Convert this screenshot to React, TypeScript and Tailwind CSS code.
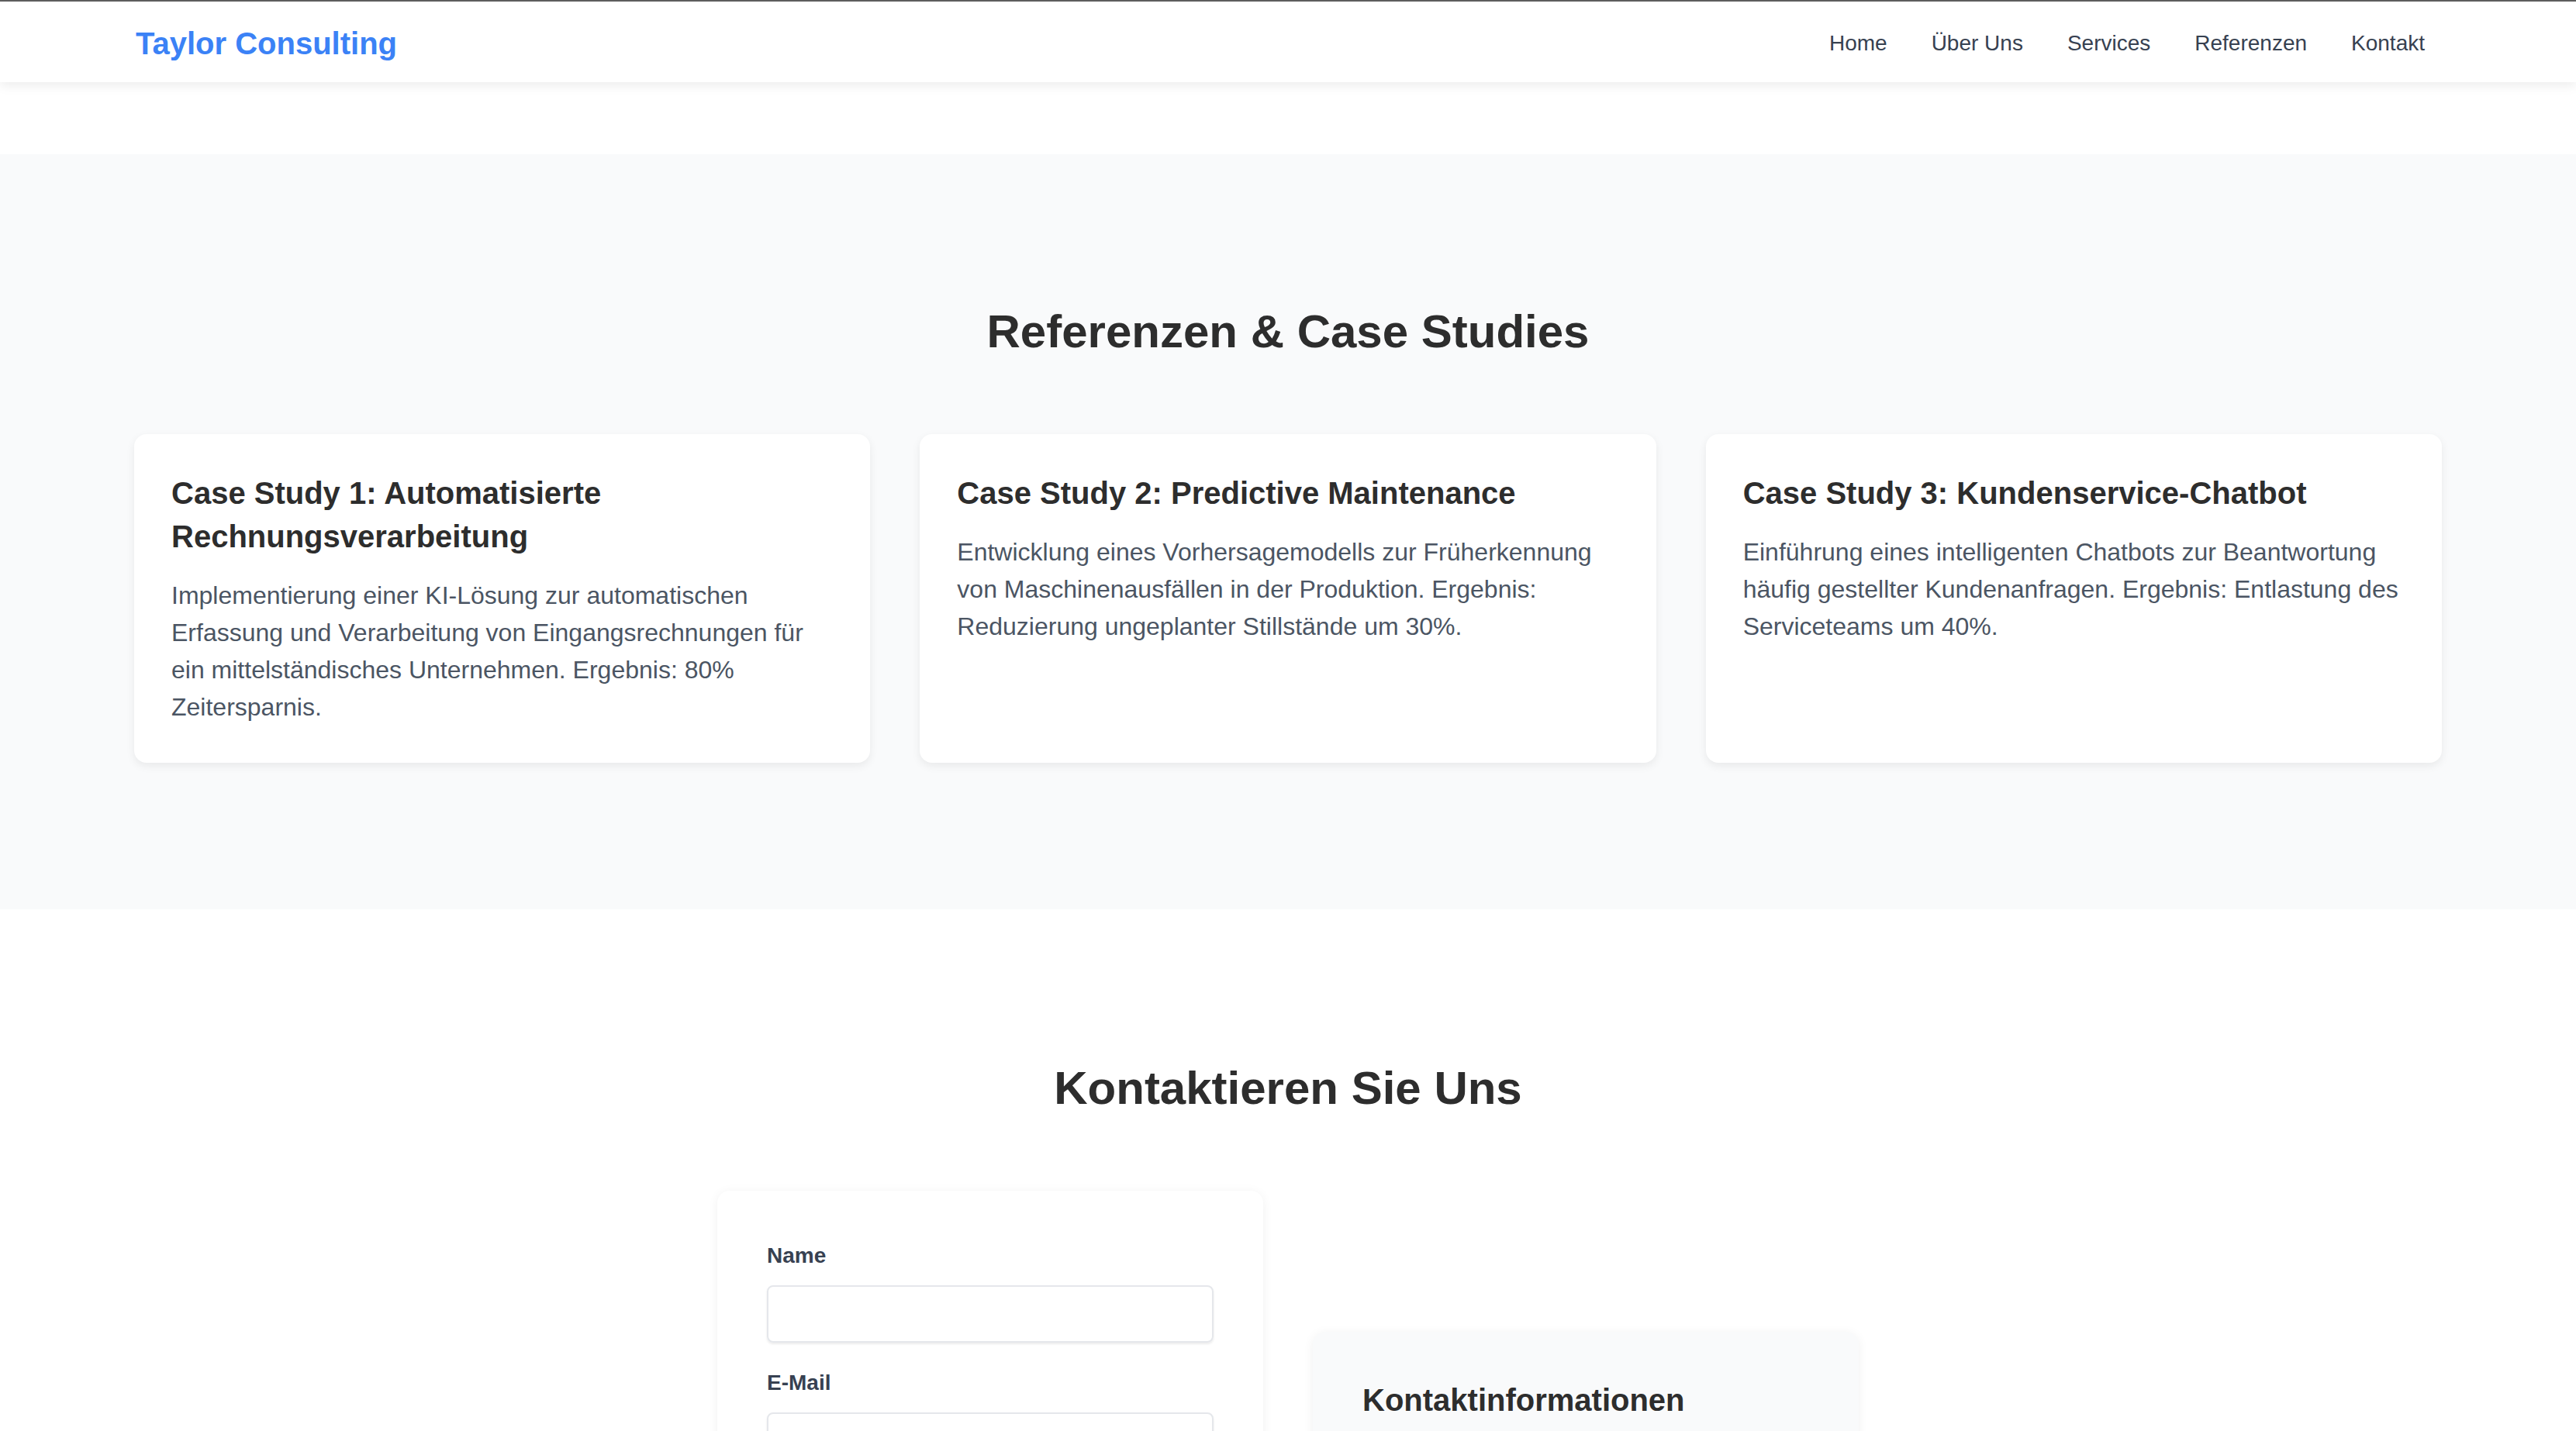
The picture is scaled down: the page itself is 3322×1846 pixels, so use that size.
import React from 'react'

const cases = [
  {
    title: 'Case Study 1: Automatisierte Rechnungsverarbeitung',
    text: 'Implementierung einer KI-Lösung zur automatischen Erfassung und Verarbeitung von Eingangsrechnungen für ein mittelständisches Unternehmen. Ergebnis: 80% Zeitersparnis.',
  },
  {
    title: 'Case Study 2: Predictive Maintenance',
    text: 'Entwicklung eines Vorhersagemodells zur Früherkennung von Maschinenausfällen in der Produktion. Ergebnis: Reduzierung ungeplanter Stillstände um 30%.',
  },
  {
    title: 'Case Study 3: Kundenservice-Chatbot',
    text: 'Einführung eines intelligenten Chatbots zur Beantwortung häufig gestellter Kundenanfragen. Ergebnis: Entlastung des Serviceteams um 40%.',
  },
]

const navItems = ['Home', 'Über Uns', 'Services', 'Referenzen', 'Kontakt']

export default function App() {
  return (
    <div className="min-h-screen bg-white font-['Liberation_Sans','Helvetica',sans-serif] border-t-2 border-[#5f5f5f]">
      {/* header */}
      <header className="relative z-10 h-[104px] bg-white shadow-[0_4px_14px_rgba(0,0,0,0.08)]">
        <div className="mx-auto flex h-full w-[2976px] items-center justify-between pt-[3px] pl-[2px]">
          <span className="text-[40px] font-bold text-[#3b82f6]">Taylor Consulting</span>
          <nav className="flex items-center gap-[57px] pr-[22px]">
            {navItems.map((item) => (
              <a key={item} className="text-[28px] text-[#374151]">
                {item}
              </a>
            ))}
          </nav>
        </div>
      </header>
      <div className="h-[93px] bg-white" />

      {/* Referenzen */}
      <section className="bg-[#f9fafb] pt-[193px] pb-[189px]">
        <div className="mx-auto w-[2976px]">
          <h2 className="mb-[96px] text-center text-[60px] font-bold leading-[72px] text-[#2d2d2d]">
            Referenzen &amp; Case Studies
          </h2>
          <div className="grid grid-cols-3 gap-[64px]">
            {cases.map((c) => (
              <div key={c.title} className="rounded-[16px] bg-white p-[48px] shadow-[0_4px_12px_rgba(0,0,0,0.07)]">
                <h3 className="mb-[24px] pr-[40px] text-[40px] font-bold leading-[56px] text-[#2d2d2d]">{c.title}</h3>
                <p className="text-[32px] leading-[48px] text-[#4b5563]">{c.text}</p>
              </div>
            ))}
          </div>
        </div>
      </section>

      {/* Kontakt */}
      <section className="bg-white pt-[195px] pb-[189px]">
        <h2 className="mb-[96px] text-center text-[60px] font-bold leading-[72px] text-[#2d2d2d]">
          Kontaktieren Sie Uns
        </h2>
        <div className="mx-auto grid w-[1472px] grid-cols-2 items-center gap-[64px]">
          <form className="rounded-[16px] bg-white p-[64px] shadow-[0_2px_14px_rgba(0,0,0,0.06)]">
            <label className="mb-[18px] block text-[28px] font-bold leading-[40px] text-[#374151]">Name</label>
            <input className="mb-[32px] block h-[74px] w-full rounded-[8px] border-2 border-[#e5e7eb] shadow-[0_2px_3px_rgba(0,0,0,0.08)]" />
            <label className="mb-[18px] block text-[28px] font-bold leading-[40px] text-[#374151]">E-Mail</label>
            <input className="mb-[32px] block h-[74px] w-full rounded-[8px] border-2 border-[#e5e7eb] shadow-[0_2px_3px_rgba(0,0,0,0.08)]" />
            <label className="mb-[18px] block text-[28px] font-bold leading-[40px] text-[#374151]">Nachricht</label>
            <textarea className="mb-[32px] block h-[200px] w-full rounded-[8px] border-2 border-[#e5e7eb] shadow-[0_2px_3px_rgba(0,0,0,0.08)]" />
            <button type="button" className="h-[80px] w-full rounded-[8px] bg-[#3b82f6] text-[32px] font-bold text-white">
              Nachricht senden
            </button>
          </form>
          <div className="h-[462px] rounded-[16px] bg-[#f9fafb] p-[64px] shadow-[0_2px_14px_rgba(0,0,0,0.06)]">
            <h3 className="mb-[32px] text-[40px] font-bold leading-[48px] text-[#2d2d2d]">Kontaktinformationen</h3>
            <div className="flex flex-col gap-[24px] text-[32px] leading-[48px] text-[#4b5563]">
              <p>Taylor Consulting</p>
              <p>info@taylor-consulting.de</p>
              <p>+49 123 456789</p>
            </div>
          </div>
        </div>
      </section>
    </div>
  )
}
